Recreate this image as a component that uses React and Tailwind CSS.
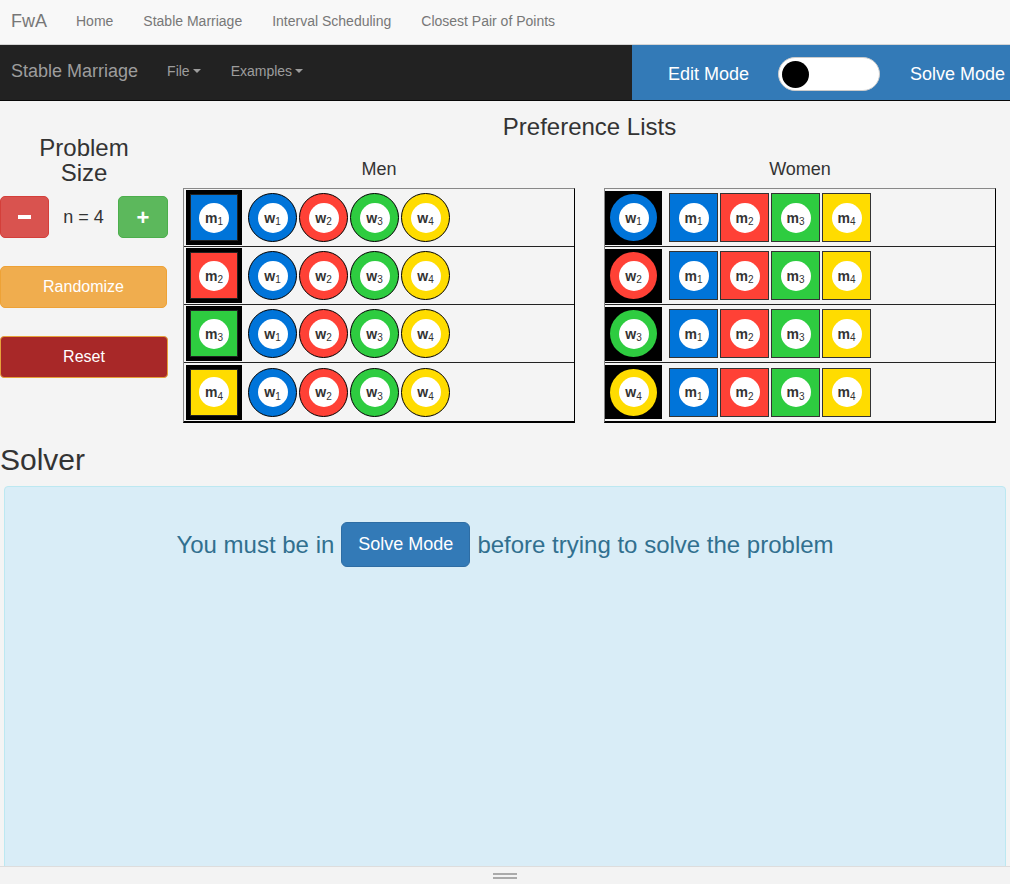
import React from "react";

const fills = ["bg-[#0074D9]", "bg-[#FF4136]", "bg-[#2ECC40]", "bg-[#FFDC00]"];

function Label({ letter, n }) {
  return (
    <div className="flex h-[30px] w-[30px] items-center justify-center rounded-full bg-white text-[#333]">
      <span className="text-[14px] font-bold leading-none">{letter}</span>
      <span className="mt-[9px] text-[10px] leading-none">{n}</span>
    </div>
  );
}

function ManSquare({ i }) {
  return (
    <div className="ml-[2px] flex h-[55px] w-[56px] items-center justify-center bg-black">
      <div className={`flex h-[47px] w-[48px] items-center justify-center border border-[#222] ${fills[i]}`}>
        <Label letter="m" n={i + 1} />
      </div>
    </div>
  );
}

function WomanCircle({ i }) {
  return (
    <div className={`flex h-[49px] w-[49px] items-center justify-center rounded-full border border-black ${fills[i]}`}>
      <Label letter="w" n={i + 1} />
    </div>
  );
}

function WomanSquare({ i }) {
  return (
    <div className="flex h-[54px] w-[57px] items-center justify-center bg-black">
      <div className={`flex h-[47px] w-[47px] items-center justify-center rounded-full ${fills[i]}`}>
        <Label letter="w" n={i + 1} />
      </div>
    </div>
  );
}

function ManTile({ i }) {
  return (
    <div className={`flex h-[49px] w-[49px] items-center justify-center border border-[#333] ${fills[i]}`}>
      <Label letter="m" n={i + 1} />
    </div>
  );
}

function PrefTable({ title, head: Head, item: Item, gap }) {
  const idx = [0, 1, 2, 3];
  return (
    <div className="w-[392px]">
      <div className="text-center text-[18px] leading-[24px] text-[#333]">{title}</div>
      <div className="mt-[7px] border-t border-r border-l border-t-[#888] border-r-black border-l-[#888] border-b-2 border-b-black">
        {idx.map((r) => (
          <div
            key={r}
            className={`flex h-[58px] items-center ${r < 3 ? "border-b border-b-[#222]" : ""}`}
          >
            <Head i={r} />
            <div className={`flex items-center ${gap}`}>
              {idx.map((c) => (
                <Item key={c} i={c} />
              ))}
            </div>
          </div>
        ))}
      </div>
    </div>
  );
}

function Caret() {
  return <span className="ml-[3px] inline-block h-0 w-0 border-t-[4px] border-r-[4px] border-l-[4px] border-t-[#9d9d9d] border-r-transparent border-l-transparent align-middle" />;
}

export default function App() {
  return (
    <div className="flex h-screen flex-col overflow-hidden bg-[#f4f4f4] font-['Liberation_Sans',Arial,sans-serif] text-[#333]">
      <div className="flex h-[45px] shrink-0 items-center border-b border-[#d5d5d5] bg-[#f8f8f8] pb-[2px] text-[#777]">
        <span className="pr-[14px] pl-[11px] text-[18px]">FwA</span>
        <span className="px-[15px] text-[14px]">Home</span>
        <span className="px-[15px] text-[14px]">Stable Marriage</span>
        <span className="px-[15px] text-[14px]">Interval Scheduling</span>
        <span className="px-[15px] text-[14px]">Closest Pair of Points</span>
      </div>

      <div className="flex h-[56px] shrink-0 border-b border-[#080808] bg-[#222]">
        <div className="flex flex-1 items-center pb-[3px] text-[#9d9d9d]">
          <span className="pr-[14px] pl-[11px] text-[18px]">Stable Marriage</span>
          <span className="flex items-center px-[15px] text-[14px]">
            File
            <Caret />
          </span>
          <span className="flex items-center px-[15px] text-[14px]">
            Examples
            <Caret />
          </span>
        </div>
        <div className="flex w-[378px] items-center bg-[#337ab7] pt-[3px] pl-[36px] text-[18px] text-white">
          <span>Edit Mode</span>
          <div className="ml-[29px] flex h-[34px] w-[102px] items-center rounded-full border border-[#ccc] bg-white px-[3px]">
            <div className="h-[27px] w-[27px] rounded-full bg-black" />
          </div>
          <span className="ml-[30px]">Solve Mode</span>
        </div>
      </div>

      <div className="flex min-h-0 flex-1 flex-col overflow-hidden">
        <div className="flex items-start">
          <div className="w-[168px] shrink-0 pt-[34px]">
            <div className="text-center text-[24px] leading-[25px]">
              Problem
              <br />
              Size
            </div>
            <div className="mt-[11px] flex items-center justify-between">
              <button className="flex h-[42px] w-[49px] items-center justify-center rounded-[5px] border border-[#d43f3a] bg-[#d9534f] text-[22px] font-bold text-white">
                <span className="block h-[4px] w-[13px] bg-white" />
              </button>
              <span className="text-[18px] text-[#333]">n = 4</span>
              <button className="flex h-[42px] w-[50px] items-center justify-center rounded-[5px] border border-[#4cae4c] bg-[#5cb85c] text-[22px] font-bold text-white">
                +
              </button>
            </div>
            <button className="mt-[28px] flex h-[42px] w-[167px] items-center justify-center rounded-[5px] border border-[#eea236] bg-[#f0ad4e] text-[16px] text-white">
              Randomize
            </button>
            <button className="mt-[28px] flex h-[42px] w-[168px] items-center justify-center rounded-[4px] border border-[#e6a13a] bg-[#a82828] text-[16px] text-white">
              Reset
            </button>
          </div>

          <div className="ml-[15px] w-[813px] pt-[12px]">
            <div className="text-center text-[24px] leading-[28px]">Preference Lists</div>
            <div className="mt-[16px] flex justify-between">
              <PrefTable title="Men" head={ManSquare} item={WomanCircle} gap="ml-[6px] gap-[2px]" />
              <PrefTable title="Women" head={WomanSquare} item={ManTile} gap="ml-[7px] gap-[2px]" />
            </div>
          </div>
        </div>

        <div className="mt-[20px] text-[30px] leading-[33px]">Solver</div>

        <div className="mx-[4px] mt-[10px] min-h-[500px] shrink-0 rounded-[4px] border border-[#bce8f1] bg-[#d9edf7] pt-[35px]">
          <div className="flex items-center justify-center text-[24px] text-[#31708f]">
            <span>You must be in</span>
            <span className="mx-[7px] flex h-[45px] items-center rounded-[6px] border border-[#2e6da4] bg-[#337ab7] px-[16px] text-[18px] text-white">
              Solve Mode
            </span>
            <span>before trying to solve the problem</span>
          </div>
        </div>
      </div>

      <div className="flex h-[18px] shrink-0 items-center justify-center border-t border-[#ddd] bg-[#f3f3f3]">
        <div className="flex flex-col gap-[2px]">
          <span className="block h-[2px] w-[24px] bg-[#aaa]" />
          <span className="block h-[2px] w-[24px] bg-[#aaa]" />
        </div>
      </div>
    </div>
  );
}
